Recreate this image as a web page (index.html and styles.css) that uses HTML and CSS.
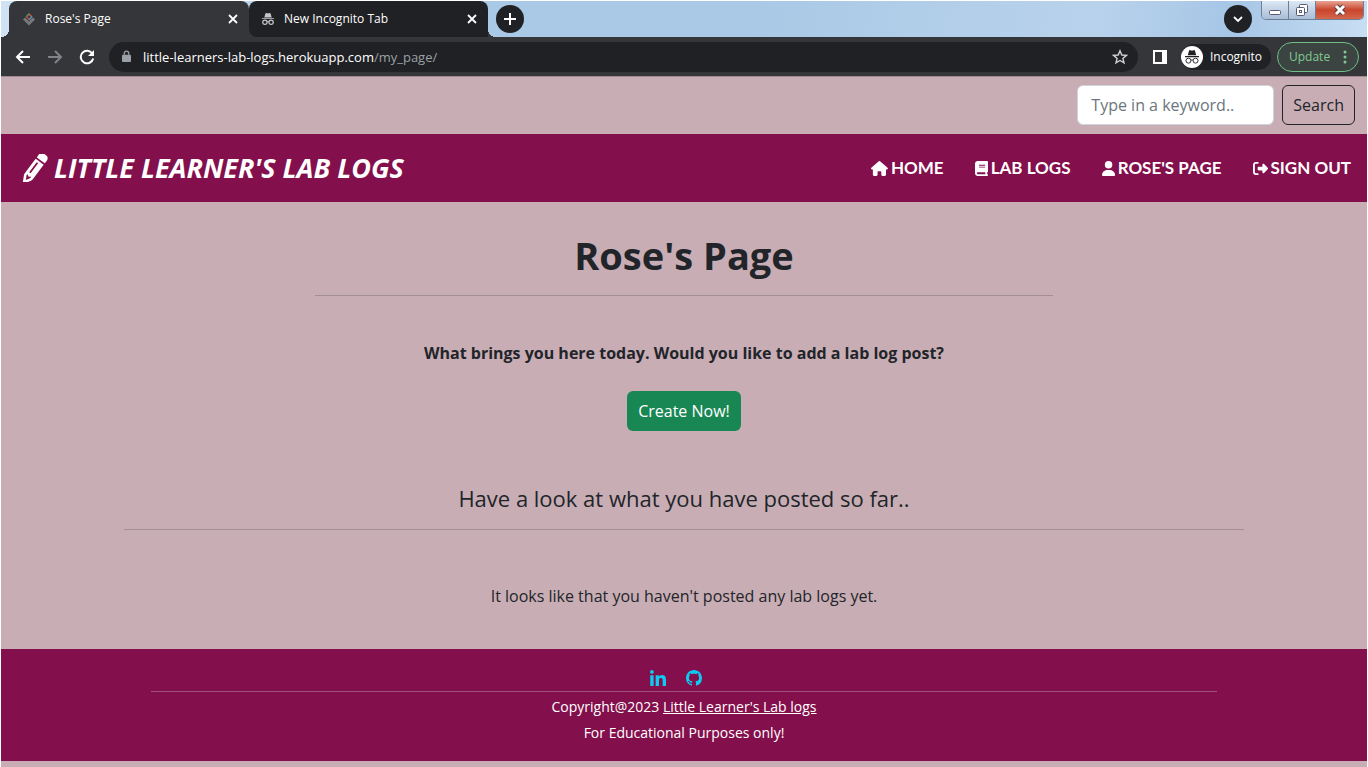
FILE: index.html
```html
<!DOCTYPE html>
<html lang="en">
<head>
<meta charset="utf-8">
<title>Rose's Page</title>
<link rel="stylesheet" href="styles.css">
</head>
<body>
<svg class="defs" aria-hidden="true">
  <symbol id="spy" viewBox="0 0 24 24">
    <path fill="currentColor" d="M7.6 2.6 5.6 9.4h12.8l-2-6.800c-.3-.9-1.200-1.200-2-.9L12 2.500l-2.400-.8c-.8-.3-1.700 0-2 .9zM1.500 10.600h21v1.600h-21z"/>
    <g fill="none" stroke="currentColor"><circle cx="6.700" cy="17.500" r="3.700"/><circle cx="17.300" cy="17.500" r="3.700"/><path d="M10.300 17c1-.8 2.400-.8 3.400 0"/></g>
  </symbol>
  <symbol id="close" viewBox="0 0 10 10"><path d="M1 1l8 8M9 1L1 9" stroke="currentColor" stroke-width="1.800" fill="none"/></symbol>
</svg>

<header class="browser">
  <div class="tabstrip">
    <div class="tab tab-active">
      <svg class="tab-icon" viewBox="0 0 14 14">
        <path d="M1 7.500l2-2 4 4 4-4 2 2-6 6z" fill="#77797c"/>
        <g fill="none" stroke-width="1.500"><path d="M7.500 1.500L4 5" stroke="#3fa37a"/><path d="M7 2l3 3" stroke="#d8573b"/><path d="M10 4.500L7 8" stroke="#4b9ac0"/><path d="M4.500 4.500L7 7.500" stroke="#c9473b"/></g>
      </svg>
      <span class="tab-title">Rose's Page</span>
      <button class="tab-close" aria-label="Close tab"><svg viewBox="0 0 10 10"><use href="#close"/></svg></button>
    </div>
    <div class="tab tab-idle">
      <svg class="tab-icon" viewBox="0 0 24 24"><use href="#spy"/></svg>
      <span class="tab-title">New Incognito Tab</span>
      <button class="tab-close" aria-label="Close tab"><svg viewBox="0 0 10 10"><use href="#close"/></svg></button>
    </div>
    <button class="round" aria-label="New tab"><svg viewBox="0 0 14 14"><path d="M7 1v12M1 7h12" stroke="#fff" stroke-width="2"/></svg></button>
    <button class="round round-menu" aria-label="Search tabs"><svg viewBox="0 0 14 14"><path d="M3 5l4 4 4-4" stroke="#fff" stroke-width="1.800" fill="none"/></svg></button>
    <div class="window-controls">
      <button class="win" aria-label="Minimize"><svg viewBox="0 0 14 14"><rect x="1.500" y="7.500" width="11" height="4" rx="1" fill="#fff" stroke="#565b70"/></svg></button>
      <button class="win" aria-label="Restore"><svg viewBox="0 0 14 14"><rect x="4.500" y="1.500" width="8" height="8" rx="1" fill="#fff" stroke="#565b70"/><rect x="1.500" y="4.500" width="8" height="8" rx="1" fill="#fff" stroke="#565b70"/><rect x="4.500" y="7.500" width="2" height="2" fill="none" stroke="#565b70"/></svg></button>
      <button class="win win-close" aria-label="Close window"><svg viewBox="0 0 14 14"><path d="M3 3l8 8M11 3l-8 8" stroke="#5b3a46" stroke-width="5"/><path d="M3 3l8 8M11 3l-8 8" stroke="#fff" stroke-width="3"/></svg></button>
    </div>
  </div>
  <div class="toolbar">
    <button class="tool" aria-label="Back"><svg viewBox="0 0 16 16"><path d="M15 8H2M8 2L2 8l6 6" stroke="#fff" stroke-width="2" fill="none"/></svg></button>
    <button class="tool" aria-label="Forward"><svg viewBox="0 0 16 16"><path d="M1 8h13M8 2l6 6-6 6" stroke="#808387" stroke-width="2" fill="none"/></svg></button>
    <button class="tool" aria-label="Reload"><svg viewBox="0 0 16 16"><path d="M13.300 4.500A6.300 6.300 0 1 0 14.200 9.500" stroke="#fff" stroke-width="2" fill="none"/><path d="M15 1v6H9z" fill="#fff"/></svg></button>
    <div class="address">
      <svg class="lock" viewBox="0 0 10 14"><rect y="5" width="10" height="8" rx="1" fill="#9aa0a6"/><path d="M2.500 5V3.500a2.500 2.500 0 0 1 5 0V5" stroke="#9aa0a6" stroke-width="1.400" fill="none"/></svg>
      <span class="url">little-learners-lab-logs.herokuapp.com<span class="path">/my_page/</span></span>
      <svg class="star" viewBox="0 0 16 16"><path d="M8 1.800l1.800 4.200 4.600.4-3.500 3 1.100 4.500L8 11.500l-4 2.400 1.100-4.500-3.500-3 4.600-.4z" stroke="#d0d2d5" stroke-width="1.400" fill="none"/></svg>
    </div>
    <button class="tool tool-panel" aria-label="Side panel"><svg viewBox="0 0 14 14"><path fill="#fff" fill-rule="evenodd" d="M0 0h14v14H0zM2 2v10h7V2z"/></svg></button>
    <div class="profile"><span class="avatar"><svg viewBox="0 0 24 24"><use href="#spy"/></svg></span>Incognito</div>
    <button class="update">Update<svg viewBox="0 0 4 14"><circle cx="2" cy="2" r="1.500"/><circle cx="2" cy="7" r="1.500"/><circle cx="2" cy="12" r="1.500"/></svg></button>
  </div>
</header>

<form class="search">
  <input class="field" type="text" placeholder="Type in a keyword.." aria-label="Keyword">
  <button class="btn btn-outline" type="button">Search</button>
</form>

<nav class="nav">
  <a class="brand" href="#"><svg viewBox="0 0 512 512"><g transform="rotate(-8 256 256)"><path fill="currentColor" d="M410.3 231l11.3-11.3-33.9-33.9-62.100-62.100L291.700 89.800l-11.300 11.300-22.600 22.600L58.600 322.900c-10.400 10.400-18 23.300-22.200 37.400L1 480.700c-2.500 8.400-.2 17.500 6.100 23.700s15.300 8.500 23.700 6.100l120.300-35.400c14.100-4.200 27-11.800 37.400-22.200L387.700 253.700 410.300 231zM160 399.400l-9.100 22.700c-4 3.100-8.500 5.400-13.300 6.900L59.400 452l23-78.100c1.400-4.900 3.800-9.400 6.900-13.300l22.700-9.100v32c0 8.800 7.200 16 16 16h32zM362.700 18.700L348.300 33.200 325.700 55.800 314.300 67.100l33.900 33.900 62.100 62.100 33.900 33.900 11.300-11.300 22.600-22.600 14.500-14.500c25-25 25-65.500 0-90.500L453.300 18.700c-25-25-65.500-25-90.500 0zm-47.400 168l-144 144c-6.200 6.200-16.400 6.200-22.600 0s-6.200-16.400 0-22.600l144-144c6.200-6.200 16.400-6.200 22.600 0s6.200 16.400 0 22.600z"/></g></svg>LITTLE LEARNER'S LAB LOGS</a>
  <div class="links">
    <a href="#"><svg viewBox="0 0 576 512"><path fill="currentColor" d="M575.800 255.500c0 18-15 32.100-32 32.100h-32l.7 160.200c0 2.700-.2 5.400-.5 8.100V472c0 22.100-17.900 40-40 40H392c-22.100 0-40-17.900-40-40V384c0-17.700-14.300-32-32-32H256c-17.700 0-32 14.300-32 32v88c0 22.100-17.900 40-40 40H104c-22.100 0-40-17.900-40-40V287.600H32c-18 0-32-14-32-32.100c0-9 3-17 10-24L266.400 8c7-7 15-8 22-8s15 2 21 7L564.800 231.500c8 7 12 15 11 24z"/></svg>HOME</a>
    <a href="#"><svg viewBox="0 0 448 512"><path fill="currentColor" d="M96 0C43 0 0 43 0 96V416c0 53 43 96 96 96H384h32c17.700 0 32-14.300 32-32s-14.300-32-32-32V384c17.700 0 32-14.300 32-32V32c0-17.700-14.300-32-32-32H384 96zm0 384H352v64H96c-17.700 0-32-14.300-32-32s14.300-32 32-32zm32-240c0-8.800 7.200-16 16-16H336c8.800 0 16 7.200 16 16s-7.200 16-16 16H144c-8.800 0-16-7.200-16-16zm16 48H336c8.800 0 16 7.200 16 16s-7.200 16-16 16H144c-8.800 0-16-7.200-16-16s7.200-16 16-16z"/></svg>LAB LOGS</a>
    <a href="#"><svg viewBox="0 0 448 512"><path fill="currentColor" d="M224 256A128 128 0 1 0 224 0a128 128 0 1 0 0 256zm-45.700 48C79.800 304 0 383.800 0 482.300C0 498.700 13.300 512 29.700 512H418.300c16.400 0 29.700-13.300 29.700-29.700C448 383.800 368.200 304 269.700 304H178.300z"/></svg>ROSE'S PAGE</a>
    <a href="#"><svg viewBox="0 0 512 512"><path fill="currentColor" d="M377.900 105.900L500.700 228.700c7.200 7.200 11.300 17.100 11.300 27.300s-4.100 20.100-11.300 27.300L377.900 406.100c-6.400 6.400-15 9.900-24 9.900c-18.700 0-33.900-15.200-33.900-33.900l0-62.100-128 0c-17.700 0-32-14.300-32-32l0-64c0-17.700 14.300-32 32-32l128 0 0-62.100c0-18.700 15.200-33.900 33.900-33.900c9 0 17.600 3.600 24 9.900zM160 96L96 96c-17.700 0-32 14.300-32 32l0 256c0 17.700 14.300 32 32 32l64 0c17.700 0 32 14.300 32 32s-14.300 32-32 32l-64 0c-53 0-96-43-96-96L0 128C0 75 43 32 96 32l64 0c17.700 0 32 14.300 32 32s-14.300 32-32 32z"/></svg>SIGN OUT</a>
  </div>
</nav>

<main class="main">
  <h1>Rose's Page</h1>
  <hr class="rule rule-short">
  <p class="prompt">What brings you here today. Would you like to add a lab log post?</p>
  <a class="btn btn-green" href="#">Create Now!</a>
  <h2>Have a look at what you have posted so far..</h2>
  <hr class="rule rule-long">
  <p class="empty">It looks like that you haven't posted any lab logs yet.</p>
</main>

<footer class="footer">
  <div class="social">
    <a href="#" aria-label="LinkedIn"><svg viewBox="0 0 448 448"><path fill="currentColor" d="M100.280 448H7.400V148.900h92.880zM53.790 108.100C24.090 108.100 0 83.500 0 53.800a53.790 53.790 0 0 1 107.580 0c0 29.700-24.100 54.300-53.790 54.300zM447.900 448h-92.680V302.400c0-34.700-.7-79.200-48.290-79.200-48.290 0-55.690 37.700-55.690 76.700V448h-92.780V148.900h89.080v40.800h1.300c12.400-23.500 42.690-48.300 87.880-48.300 94 0 111.280 61.900 111.280 142.300V448z"/></svg></a>
    <a href="#" aria-label="GitHub"><svg viewBox="0 0 16 16"><path fill="currentColor" d="M8 0C3.580 0 0 3.580 0 8c0 3.540 2.290 6.530 5.470 7.590.4.070.55-.17.55-.38 0-.19-.01-.82-.01-1.490-2.010.37-2.530-.49-2.690-.94-.09-.23-.48-.94-.82-1.130-.28-.15-.68-.52-.01-.53.63-.01 1.080.58 1.230.82.72 1.210 1.870.87 2.330.66.070-.52.28-.87.51-1.070-1.780-.2-3.640-.89-3.640-3.950 0-.87.31-1.590.82-2.150-.08-.2-.36-1.020.08-2.120 0 0 .67-.21 2.200.82.64-.18 1.320-.27 2-.27s1.360.09 2 .27c1.530-1.040 2.200-.82 2.200-.82.44 1.100.16 1.920.08 2.120.51.56.82 1.270.82 2.150 0 3.070-1.870 3.750-3.650 3.950.29.25.54.73.54 1.480 0 1.070-.01 1.930-.01 2.200 0 .21.15.46.55.38A8.010 8.010 0 0 0 16 8c0-4.420-3.580-8-8-8z"/></svg></a>
  </div>
  <hr class="rule rule-footer">
  <p>Copyright@2023 <a href="#">Little Learner's Lab logs</a></p>
  <p>For Educational Purposes only!</p>
</footer>
</body>
</html>
```
FILE: styles.css
```css
* { box-sizing: border-box; }

body {
  margin: 0;
  min-height: 100vh;
  border: solid #fff;
  border-width: 1px 1px 0;
  background: #c9adb5;
  color: #212529;
  font: 16px/24px "Open Sans", "Noto Sans", sans-serif;
}

h1, h2, p, hr { margin: 0; }
a { color: inherit; }
svg { display: block; flex: none; }
button { font: inherit; color: inherit; padding: 0; border: 0; background: none; }
.defs { position: absolute; width: 0; height: 0; }

/* Browser window */
.browser { color: #fff; font-size: 13px; line-height: 20px; }

.tabstrip {
  display: flex;
  height: 36px;
  background: linear-gradient(100deg, #cfe3f5, #a9c9e6 35%, #a9c9e6 55%, #b9d2ec 80%, #a6c6e6 90%, #c8def3);
  padding-left: 8px;
}

.tab {
  position: relative;
  display: flex;
  align-items: center;
  width: 240px;
  padding: 0 11px 0 13px;
  border-radius: 8px 8px 0 0;
  font-size: 12px;
}
.tab-active { background: #35363a; }
.tab-idle { width: 239px; padding-left: 12px; background: #202124; border-radius: 8px 8px 0 8px; }
.tab-active::before, .tab-active::after, .tab-idle::after {
  content: "";
  position: absolute;
  bottom: 0;
  width: 8px;
  height: 8px;
}
.tab-active::before { left: -8px; background: radial-gradient(circle at 0 0, transparent 8px, #35363a 8px); }
.tab-active::after { right: -8px; background: #35363a; }
.tab-idle::after { right: -8px; background: radial-gradient(circle at 100% 0, transparent 8px, #35363a 8px); }

.tab-icon { width: 14px; height: 14px; color: #c4c7ca; stroke-width: 2; }
.tab-title { flex: 1; margin-left: 9px; }
.tab-close svg { width: 10px; height: 10px; }

.round {
  display: grid;
  place-items: center;
  width: 28px;
  height: 28px;
  margin: 4px 0 0 8px;
  border-radius: 50%;
  background: #202124;
}
.round svg { width: 14px; height: 14px; }
.round-menu { margin-left: auto; }

.window-controls { display: flex; height: 19px; margin: 0 3px 0 9px; border: 1px solid #6c7f98; border-top: 0; border-radius: 0 0 5px 5px; overflow: hidden; }
.win { display: grid; place-items: center; width: 27px; border-right: 1px solid #6c7f98; background: linear-gradient(#dce8f4, #a9bdd6); }
.win svg { width: 14px; height: 14px; }
.win-close { width: 47px; border: 0; background: linear-gradient(#e6a493, #c9432c 50%, #d4684c); }

.toolbar {
  display: flex;
  align-items: center;
  height: 39px;
  padding: 0 8px 0 14px;
  background: #35363a;
}
.tool { width: 16px; margin-right: 16px; }
.tool svg { width: 16px; height: 16px; }
.address {
  flex: 1;
  display: flex;
  align-items: center;
  height: 30px;
  margin: 0 15px 0 -2px;
  padding: 0 10px 0 13px;
  border-radius: 15px;
  background: #202124;
}
.lock { width: 9px; height: 13px; }
.url { flex: 1; margin-left: 12px; }
.path { color: #9aa0a6; }
.star { width: 16px; height: 16px; }
.tool-panel { margin-right: 12px; }
.tool-panel svg { width: 14px; height: 14px; }
.profile { display: flex; align-items: center; gap: 7px; height: 26px; margin-right: 6px; padding-right: 9px; border-radius: 13px; background: #202124; font-size: 12px; }
.avatar { display: grid; place-items: center; width: 22px; height: 22px; border-radius: 50%; background: #fff; color: #202124; }
.avatar svg { width: 16px; height: 16px; stroke-width: 1.4; }
.update {
  display: flex;
  align-items: center;
  justify-content: space-between;
  width: 82px;
  height: 30px;
  padding: 0 11px;
  border: 1px solid #6fbf87;
  border-radius: 15px;
  background: #3b4441;
  color: #81c995;
  font-size: 12px;
}
.update svg { width: 4px; height: 14px; fill: currentColor; }

/* Search row */
.search {
  display: flex;
  justify-content: flex-end;
  gap: 8px;
  padding: 8px 12px 9px;
  border-top: 1px solid #a08a90;
}
.field, .btn { height: 40px; border-radius: 6px; font: inherit; }
.field { width: 197px; padding: 0 13px; border: 1px solid #ced4da; background: #fff; }
.field::placeholder { color: #6c757d; opacity: 1; }
.btn { display: inline-flex; align-items: center; padding: 0 10px; border: 1px solid transparent; text-decoration: none; }
.btn-outline { border-color: #212529; }
.btn-green { background: #198754; color: #fff; }

/* Site navigation */
.nav {
  display: flex;
  align-items: center;
  justify-content: space-between;
  min-height: 68px;
  padding: 0 16px 0 20px;
  background: #830f4c;
  color: #fff;
}
.nav a { display: flex; align-items: center; text-decoration: none; }
.brand { gap: 5px; font-size: 27px; font-weight: 700; font-style: italic; line-height: 36px; }
.brand svg { width: 28px; height: 28px; }
.links { display: flex; gap: 31px; font: 700 17px/24px Lato, sans-serif; }
.links a { gap: 3px; }
.links svg { height: 15px; }

/* Page content */
.main { display: flex; flex-direction: column; align-items: center; padding: 28px 0 41px; }
h1 { font-size: 38px; line-height: 50px; }
.rule { border: 0; border-top: 1px solid; }
.rule-short { width: 54%; margin-top: 15px; color: #a48f97; }
.prompt { margin: 45px 0 26px; font-weight: 700; }
h2 { margin: 52px 0 16px; font-size: 22px; font-weight: 500; line-height: 30px; }
.rule-long { width: 82%; color: #a48f97; }
.empty { margin-top: 54px; }

/* Footer */
.footer {
  display: flex;
  flex-direction: column;
  align-items: center;
  padding: 21px 0 15px;
  background: #830f4c;
  color: #fff;
  font-size: 14px;
  line-height: 26px;
}
.social { display: flex; gap: 20px; margin-right: 17px; color: #0dcaf0; }
.social svg { width: 16px; height: 16px; }
.rule-footer { width: 78%; margin: 5px 0 2px; color: #a0507c; }
```
